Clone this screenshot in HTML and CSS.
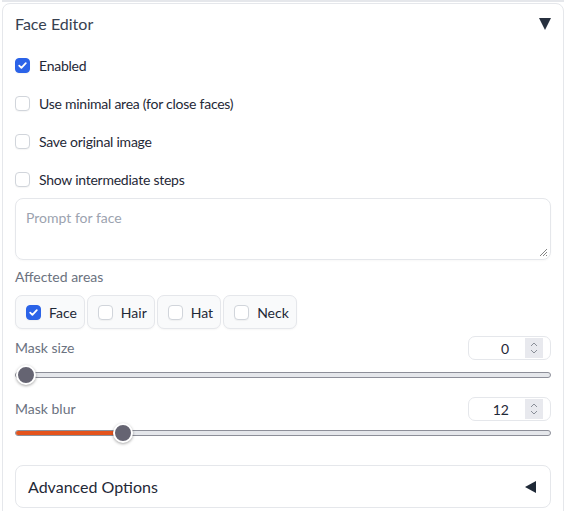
FILE: index.html
```html
<!DOCTYPE html>
<html>
<head>
<meta charset="utf-8">
<link rel="stylesheet" href="styles.css">
</head>
<body>
<div class="topband"></div>
<div class="panel">
  <div class="header">
    <span class="title">Face Editor</span>
    <svg class="tri" width="12" height="12" viewBox="0 0 12 12"><polygon points="0,0 12,0 6,12" fill="#27303f"/></svg>
  </div>
  <label class="row"><span class="cb checked"><svg width="15" height="15" viewBox="0 0 15 15"><path d="M4.2 7.6 L6.4 9.8 L10.8 5.2" stroke="#fff" stroke-width="1.8" fill="none" stroke-linecap="round" stroke-linejoin="round"/></svg></span><span class="lbl">Enabled</span></label>
  <label class="row"><span class="cb"></span><span class="lbl">Use minimal area (for close faces)</span></label>
  <label class="row"><span class="cb"></span><span class="lbl">Save original image</span></label>
  <label class="row"><span class="cb"></span><span class="lbl">Show intermediate steps</span></label>
  <div class="textarea"><span class="ph">Prompt for face</span>
    <svg class="grip" width="9" height="9" viewBox="0 0 9 9"><path d="M8 1 L1 8 M8 4 L4 8 M8 7 L7 8" stroke="#777" stroke-width="0.9"/></svg>
  </div>
  <div class="sublabel">Affected areas</div>
  <div class="chips">
    <label class="chip"><span class="cb checked"><svg width="15" height="15" viewBox="0 0 15 15"><path d="M4.2 7.6 L6.4 9.8 L10.8 5.2" stroke="#fff" stroke-width="1.8" fill="none" stroke-linecap="round" stroke-linejoin="round"/></svg></span><span class="lbl">Face</span></label>
    <label class="chip"><span class="cb"></span><span class="lbl">Hair</span></label>
    <label class="chip"><span class="cb"></span><span class="lbl">Hat</span></label>
    <label class="chip"><span class="cb"></span><span class="lbl">Neck</span></label>
  </div>
  <div class="numrow">
    <span class="sublabel2">Mask size</span>
    <div class="num"><span class="val">0</span><span class="spin"><svg width="10" height="16" viewBox="0 0 10 16"><path d="M2 6 L5 3 L8 6 M2 10 L5 13 L8 10" stroke="#8a8f98" stroke-width="1" fill="none"/></svg></span></div>
  </div>
  <div class="slider">
    <div class="track"><div class="fill" style="width:0px"></div><div class="thumb" style="left:0px"></div></div>
  </div>
  <div class="numrow">
    <span class="sublabel2">Mask blur</span>
    <div class="num"><span class="val">12</span><span class="spin"><svg width="10" height="16" viewBox="0 0 10 16"><path d="M2 6 L5 3 L8 6 M2 10 L5 13 L8 10" stroke="#8a8f98" stroke-width="1" fill="none"/></svg></span></div>
  </div>
  <div class="slider second">
    <div class="track"><div class="fill" style="width:107px"></div><div class="thumb" style="left:97px"></div></div>
  </div>
  <div class="advanced">
    <span class="advtitle">Advanced Options</span>
    <svg width="11" height="12" viewBox="0 0 11 12"><polygon points="11,0 11,12 0,6" fill="#1f2937"/></svg>
  </div>
</div>
</body>
</html>
```
FILE: styles.css
```css
* { box-sizing: border-box; }
html, body { margin: 0; padding: 0; background: #fff; }
body { font-family: "Source Sans Pro", Lato, "Noto Sans", sans-serif; font-size: 14px; color: #1f2937; width: 566px; height: 511px; overflow: hidden; }
.topband { height: 2px; margin: 0 2px; background: #e5e7eb; }
.panel { margin: 1px 2px 0 2px; border: 1px solid #e5e7eb; border-radius: 8px; padding: 0 12px; height: 520px; }
.header { height: 42px; display: flex; align-items: center; justify-content: space-between; padding-bottom: 3px; }
.title { font-size: 16px; color: #374151; }
.tri { margin-top: 1px; }
.row { height: 38px; display: flex; align-items: center; gap: 9px; }
.row .lbl { letter-spacing: -0.25px; }
.cb { width: 15px; height: 15px; border: 1px solid #d1d5db; border-radius: 4px; background: #fff; display: inline-flex; flex: none; box-shadow: 0 1px 1px rgba(0,0,0,0.04); }
.cb.checked { background: #2b63e8; border-color: #2b63e8; }
.cb svg { margin: -1px; }
.lbl { color: #1f2937; }
.textarea { height: 62px; border: 1px solid #e5e7eb; border-radius: 8px; padding: 10px 10px; position: relative; box-shadow: 0 1px 2px rgba(0,0,0,0.03); }
.ph { color: #9ca3af; font-size: 14px; }
.grip { position: absolute; right: 2px; bottom: 2px; }
.sublabel { height: 35px; padding-top: 8px; line-height: 18px; color: #6b7280; }
.chips { display: flex; gap: 2px; height: 34px; }
.chip { display: flex; align-items: center; gap: 8px; padding: 0 7px 0 10px; border: 1px solid #e5e7eb; border-radius: 7px; background: #f9fafb; box-shadow: 0 1px 2px rgba(0,0,0,0.04); }
.numrow { display: flex; justify-content: space-between; align-items: center; margin-top: 7px; height: 24px; }
.sublabel2 { color: #6b7280; margin-top: -2px; }
.num { width: 83px; height: 24px; border: 1px solid #e5e7eb; border-radius: 7px; display: flex; align-items: center; justify-content: flex-end; padding-right: 7px; }
.val { color: #1f2937; margin-right: 16px; }
.spin { width: 18px; height: 20px; background: #e8e9ee; display: flex; align-items: center; justify-content: center; }
.slider { height: 30px; display: flex; align-items: center; }
.slider.second { height: 24px; }
.track { position: relative; width: 100%; height: 6px; border: 1px solid #8d8f99; border-radius: 3px; background: #e5e7eb; }
.fill { height: 4px; background: #e4531c; border-radius: 2px 0 0 2px; }
.thumb { position: absolute; top: -8px; width: 20px; height: 20px; border-radius: 50%; background: #656472; border: 2px solid #fff; box-shadow: 0 1px 3px rgba(0,0,0,0.35); }
.advanced { margin-top: 20px; height: 43px; border: 1px solid #e5e7eb; border-radius: 8px; display: flex; align-items: center; justify-content: space-between; padding: 0 14px 0 12px; }
.advtitle { font-size: 16px; color: #1f2937; }
```
